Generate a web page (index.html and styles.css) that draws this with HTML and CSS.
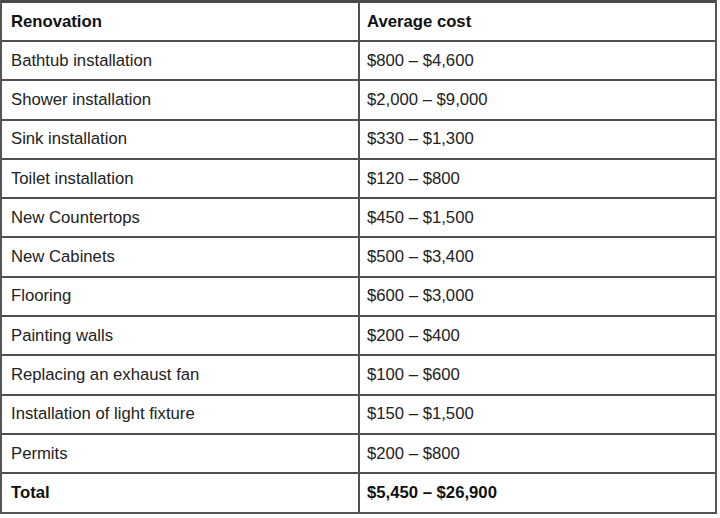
FILE: index.html
```html
<!DOCTYPE html>
<html>
<head>
<meta charset="utf-8">
<link rel="stylesheet" href="styles.css">
</head>
<body>
<table class="costs">
  <thead>
    <tr><th class="c1">Renovation</th><th class="c2">Average cost</th></tr>
  </thead>
  <tbody>
    <tr><td class="c1">Bathtub installation</td><td class="c2">$800 – $4,600</td></tr>
    <tr><td class="c1">Shower installation</td><td class="c2">$2,000 – $9,000</td></tr>
    <tr><td class="c1">Sink installation</td><td class="c2">$330 – $1,300</td></tr>
    <tr><td class="c1">Toilet installation</td><td class="c2">$120 – $800</td></tr>
    <tr><td class="c1">New Countertops</td><td class="c2">$450 – $1,500</td></tr>
    <tr><td class="c1">New Cabinets</td><td class="c2">$500 – $3,400</td></tr>
    <tr><td class="c1">Flooring</td><td class="c2">$600 – $3,000</td></tr>
    <tr><td class="c1">Painting walls</td><td class="c2">$200 – $400</td></tr>
    <tr><td class="c1">Replacing an exhaust fan</td><td class="c2">$100 – $600</td></tr>
    <tr><td class="c1">Installation of light fixture</td><td class="c2">$150 – $1,500</td></tr>
    <tr><td class="c1">Permits</td><td class="c2">$200 – $800</td></tr>
    <tr class="total"><td class="c1">Total</td><td class="c2">$5,450 – $26,900</td></tr>
  </tbody>
</table>
</body>
</html>
```

FILE: styles.css
```css
html, body {
  margin: 0;
  padding: 0;
  background: #ffffff;
}

.costs {
  width: 717px;
  border-collapse: separate;
  border-spacing: 0;
  border-top: 3px solid #4a4a4a;
  border-left: 2px solid #555555;
  border-right: 2px solid #555555;
  border-bottom: 2px solid #555555;
  font-family: "Liberation Sans", Arial, sans-serif;
  font-size: 16.7px;
  color: #222222;
  table-layout: fixed;
}

.costs th,
.costs td {
  box-sizing: border-box;
  text-align: left;
  vertical-align: middle;
  padding: 0 8px;
  border-bottom: 2px solid #505050;
  height: 39.3px;
  white-space: nowrap;
}

.costs th {
  height: 39px;
  font-weight: bold;
  color: #111111;
}

.costs .c1 {
  width: 358px;
  padding-left: 9px;
  border-right: 2px solid #505050;
}

.costs .c2 {
  padding-left: 7px;
}

.costs tr.total td {
  border-bottom: none;
  height: 37.3px;
  font-weight: bold;
  color: #111111;
}
```
